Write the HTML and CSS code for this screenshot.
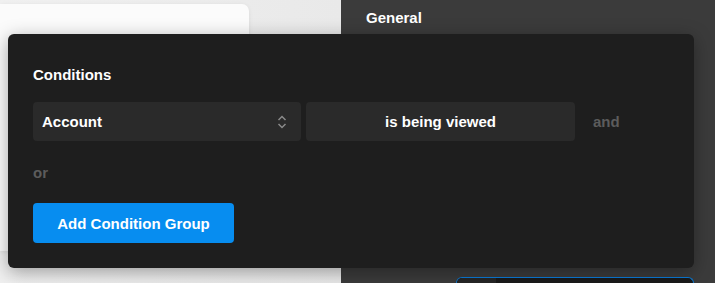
FILE: index.html
```html
<!DOCTYPE html>
<html lang="en">

<head>
    <meta charset="UTF-8">
    <meta name="viewport" content="width=device-width, initial-scale=1.0">
    <title>Conditions</title>
    <link rel="stylesheet" href="styles.css">
</head>

<body>
    <div class="canvas">
        <div class="card"></div>
    </div>

    <div class="sidebar">
        <h3 class="sidebar_title">General</h3>
        <div class="sidebar_input">
            <div class="sidebar_input_prefix"></div>
        </div>
    </div>

    <!-- conditions popup -->
    <div class="modal">
        <h2 class="modal_title">Conditions</h2>

        <div class="cond_row">
            <div class="cond_select">
                <span>Account</span>
                <svg class="chevron" width="10" height="14" viewBox="0 0 10 14">
                    <path d="M1.5 5 L5 1.5 L8.5 5" />
                    <path d="M1.5 9 L5 12.5 L8.5 9" />
                </svg>
            </div>
            <div class="cond_value">is being viewed</div>
            <span class="cond_join">and</span>
        </div>

        <p class="cond_or">or</p>

        <button type="button" class="add_btn">Add Condition Group</button>
    </div>
</body>

</html>
```

FILE: styles.css
```css
body {
    margin: 0;
    width: 715px;
    height: 283px;
    overflow: hidden;
    display: flex;
    font-family: "Liberation Sans", Arial, sans-serif;
    font-size: 15px;
    font-weight: bold;
    line-height: 18px;
}

.canvas {
    width: 341px;
    padding-top: 4px;
    box-sizing: border-box;
    background: linear-gradient(90deg, #f0f0f0, #e9e9e9);
}

.card {
    width: 249px;
    height: 247px;
    background-color: #fbfbfb;
    border-radius: 0 7px 7px 0;
    box-shadow: 0 1px 4px rgba(0, 0, 0, 0.08);
}

.sidebar {
    flex: 1;
    padding: 9px 0 0 25px;
    background-color: #3b3b3b;
}

.sidebar_title {
    margin: 0;
    font-size: 15px;
    line-height: 18px;
    color: white;
}

/* input cut off by the bottom edge */
.sidebar_input {
    display: flex;
    margin: 250px 0 0 90px;
    width: 238px;
    height: 6px;
    box-sizing: border-box;
    border: 1px solid #0a7bd8;
    border-bottom: none;
    border-radius: 6px 6px 0 0;
    background-color: #1a1a1a;
    overflow: hidden;
}

.sidebar_input_prefix {
    width: 39px;
    background-color: #262626;
}

.modal {
    position: absolute;
    left: 8px;
    top: 34px;
    width: 686px;
    box-sizing: border-box;
    padding: 32px 25px 25px;
    background-color: #1e1e1e;
    border-radius: 6px;
    box-shadow: 0 4px 18px rgba(0, 0, 0, 0.35);
    color: white;
}

.modal_title {
    margin: 0;
    font-size: 15px;
    line-height: 18px;
}

.cond_row {
    display: flex;
    align-items: center;
    gap: 5px;
    margin-top: 18px;
}

.cond_select,
.cond_value {
    height: 39px;
    box-sizing: border-box;
    border-radius: 4px;
    background-color: #2a2a2a;
    display: flex;
    align-items: center;
}

.cond_select {
    width: 268px;
    padding: 0 14px 0 9px;
    justify-content: space-between;
}

.chevron {
    fill: none;
    stroke: #8a8a8a;
    stroke-width: 1.5;
}

.cond_value {
    width: 269px;
    justify-content: center;
}

.cond_join {
    margin-left: 13px;
    color: #5c5c5c;
}

.cond_or {
    margin: 23px 0 0;
    color: #5c5c5c;
}

.add_btn {
    margin-top: 21px;
    width: 201px;
    height: 40px;
    border: none;
    border-radius: 4px;
    background-color: #078df0;
    color: white;
    font-family: inherit;
    font-size: 15px;
    font-weight: bold;
}
```
